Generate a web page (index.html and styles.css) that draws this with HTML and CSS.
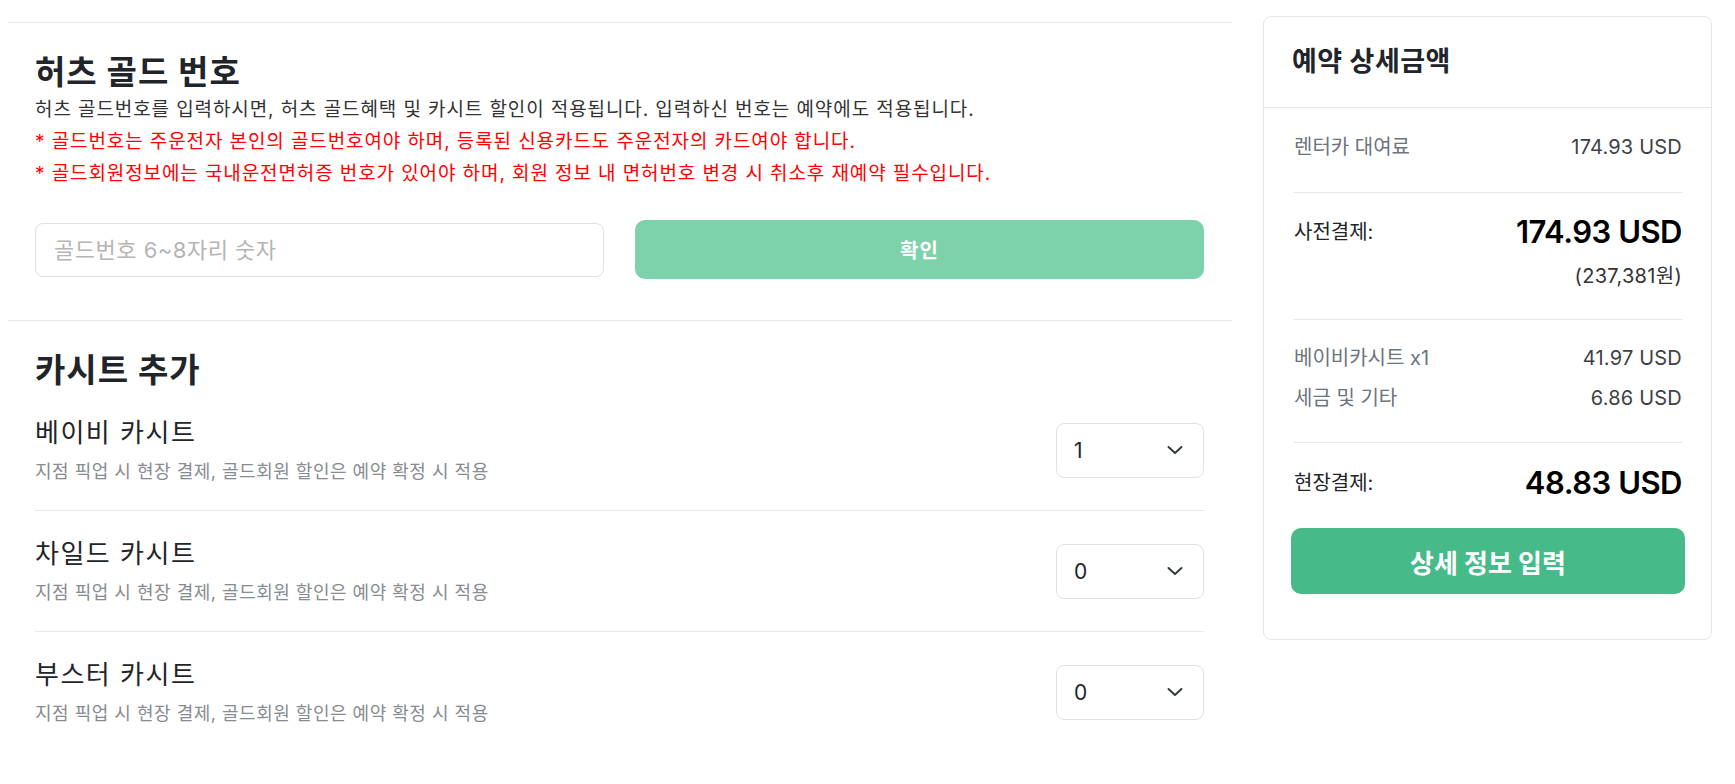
FILE: index.html
```html
<!DOCTYPE html>
<html lang="ko">
<head>
<meta charset="utf-8">
<title>예약</title>
<link rel="stylesheet" href="styles.css">
</head>
<body>
<div class="page">
  <main class="main">
    <section class="gold">
      <h2 class="title">허츠 골드 번호</h2>
      <p class="desc">허츠 골드번호를 입력하시면, 허츠 골드혜택 및 카시트 할인이 적용됩니다. 입력하신 번호는 예약에도 적용됩니다.</p>
      <p class="warn">* 골드번호는 주운전자 본인의 골드번호여야 하며, 등록된 신용카드도 주운전자의 카드여야 합니다.</p>
      <p class="warn">* 골드회원정보에는 국내운전면허증 번호가 있어야 하며, 회원 정보 내 면허번호 변경 시 취소후 재예약 필수입니다.</p>
      <div class="gold-form">
        <input class="gold-input" type="text" placeholder="골드번호 6~8자리 숫자">
        <button class="btn-confirm" type="button">확인</button>
      </div>
    </section>
    <section class="seats">
      <h2 class="title title-seats">카시트 추가</h2>
      <div class="seat-row">
        <div class="seat-info">
          <div class="seat-name">베이비 카시트</div>
          <div class="seat-sub">지점 픽업 시 현장 결제, 골드회원 할인은 예약 확정 시 적용</div>
        </div>
        <div class="select"><span class="select-val">1</span><svg class="chev" viewBox="0 0 16 16" width="16" height="16"><path d="M1.5 5 L8 11 L14.5 5" fill="none" stroke="#343a40" stroke-width="2" stroke-linecap="round" stroke-linejoin="round"/></svg></div>
      </div>
      <div class="seat-row">
        <div class="seat-info">
          <div class="seat-name">차일드 카시트</div>
          <div class="seat-sub">지점 픽업 시 현장 결제, 골드회원 할인은 예약 확정 시 적용</div>
        </div>
        <div class="select"><span class="select-val">0</span><svg class="chev" viewBox="0 0 16 16" width="16" height="16"><path d="M1.5 5 L8 11 L14.5 5" fill="none" stroke="#343a40" stroke-width="2" stroke-linecap="round" stroke-linejoin="round"/></svg></div>
      </div>
      <div class="seat-row">
        <div class="seat-info">
          <div class="seat-name">부스터 카시트</div>
          <div class="seat-sub">지점 픽업 시 현장 결제, 골드회원 할인은 예약 확정 시 적용</div>
        </div>
        <div class="select"><span class="select-val">0</span><svg class="chev" viewBox="0 0 16 16" width="16" height="16"><path d="M1.5 5 L8 11 L14.5 5" fill="none" stroke="#343a40" stroke-width="2" stroke-linecap="round" stroke-linejoin="round"/></svg></div>
      </div>
    </section>
  </main>
  <aside class="card">
    <div class="card-head">예약 상세금액</div>
    <div class="card-body">
      <div class="blk blk-rent">
        <div class="line"><span class="lbl">렌터카 대여료</span><span class="amt">174.93 USD</span></div>
      </div>
      <div class="blk blk-pre">
        <div class="line total"><span class="lbl-dark">사전결제:</span><span class="big">174.93 USD</span></div>
        <div class="krw">(237,381원)</div>
      </div>
      <div class="blk blk-items">
        <div class="line"><span class="lbl">베이비카시트 x1</span><span class="amt">41.97 USD</span></div>
        <div class="line"><span class="lbl">세금 및 기타</span><span class="amt">6.86 USD</span></div>
      </div>
      <div class="blk blk-site">
        <div class="line total"><span class="lbl-dark">현장결제:</span><span class="big">48.83 USD</span></div>
      </div>
      <button class="btn-main" type="button">상세 정보 입력</button>
    </div>
  </aside>
</div>
</body>
</html>
```

FILE: styles.css
```css
* { box-sizing: border-box; }
html, body { margin: 0; padding: 0; background: #fff; }
body {
  font-family: Inter, "Noto Sans CJK KR", "Noto Sans", sans-serif;
  color: #212529;
}
p { margin: 0; }
h2 { margin: 0; }

.page {
  display: flex;
  align-items: flex-start;
  padding-left: 8px;
}

.main {
  width: 1224px;
  margin-top: 22px;
  border-top: 1px solid #e6e8eb;
}

.gold {
  padding: 27px 28px 41px 27px;
  border-bottom: 1px solid #e6e8eb;
}

.title {
  font-size: 33px;
  font-weight: 700;
  line-height: 44px;
  letter-spacing: 1px;
  color: #212529;
}

.desc {
  font-size: 19px;
  line-height: 32px;
  color: #333;
  letter-spacing: 0.9px;
}

.warn {
  font-size: 19px;
  line-height: 32px;
  color: #ff0000;
  letter-spacing: 0.9px;
}

.gold-form {
  display: grid;
  grid-template-columns: 1fr 1fr;
  align-items: center;
  gap: 31px;
  margin-top: 30px;
}

.gold-input {
  width: 100%;
  min-width: 0;
  height: 54px;
  border: 1px solid #dfe1e5;
  border-radius: 8px;
  padding: 0 18px;
  font-family: Inter, "Noto Sans CJK KR", sans-serif;
  font-size: 22px;
  letter-spacing: 0.5px;
  color: #333;
  outline: none;
}
.gold-input::placeholder { color: #b5b5b5; }

.btn-confirm {
  width: 100%;
  height: 59px;
  border: none;
  border-radius: 10px;
  background: #7dd1ab;
  color: #fff;
  font-family: Inter, "Noto Sans CJK KR", sans-serif;
  font-size: 20px;
  font-weight: 700;
  letter-spacing: 1px;
}

.seats {
  padding: 30px 28px 0 27px;
}

.title-seats {
  line-height: 39px;
}

.seat-row {
  display: flex;
  align-items: center;
  justify-content: space-between;
  padding: 24px 0 26px;
  border-bottom: 1px solid #e6e8eb;
}
.seat-row:last-child { border-bottom: none; }

.seat-name {
  font-size: 26px;
  line-height: 36px;
  padding-top: 1px;
  color: #212529;
  letter-spacing: 1.5px;
}

.seat-sub {
  margin-top: 9px;
  font-size: 18px;
  line-height: 24px;
  color: #888c91;
  letter-spacing: 0.5px;
}

.select {
  width: 148px;
  height: 55px;
  border: 1px solid #dfe1e5;
  border-radius: 8px;
  display: flex;
  align-items: center;
  justify-content: space-between;
  padding: 0 20px 0 17px;
  margin-top: 2px;
}
.select-val {
  font-size: 21px;
  color: #212529;
}
.chev { display: block; }

.card {
  width: 449px;
  margin-left: 31px;
  margin-top: 16px;
  border: 1px solid #e4e6e9;
  border-radius: 8px;
}

.card-head {
  padding: 28px 28px 28px;
  font-size: 27px;
  font-weight: 700;
  line-height: 34px;
  letter-spacing: 0.5px;
  border-bottom: 1px solid #e4e6e9;
  color: #212529;
}

.card-body {
  padding: 0 29px 45px 30px;
}

.blk { border-bottom: 1px solid #e6e8eb; }
.blk-rent { padding: 25px 0 31px; }
.blk-pre { padding: 19px 0 30px; }
.blk-items { padding: 24px 0 30px; display: flex; flex-direction: column; gap: 12px; }
.blk-site { padding: 20px 0 0; border-bottom: none; }

.line {
  display: flex;
  align-items: center;
  justify-content: space-between;
  line-height: 28px;
}
.line.total { line-height: 40px; }

.lbl {
  font-size: 20px;
  color: #6c757d;
}
.amt {
  font-size: 20px;
  color: #3d4146;
  letter-spacing: 0.2px;
}
.lbl-dark {
  font-size: 20px;
  color: #212529;
}
.big {
  font-size: 31px;
  font-weight: 600;
  color: #000;
  letter-spacing: -0.5px;
}
.krw {
  text-align: right;
  margin-top: 11px;
  line-height: 26px;
  font-size: 20px;
  color: #333;
  letter-spacing: 0.3px;
}

.btn-main {
  display: block;
  width: calc(100% + 6px);
  margin: 25px -3px 0;
  height: 66px;
  border: none;
  border-radius: 10px;
  background: #46bb89;
  color: #fff;
  font-family: Inter, "Noto Sans CJK KR", sans-serif;
  font-size: 26px;
  font-weight: 700;
}
```
